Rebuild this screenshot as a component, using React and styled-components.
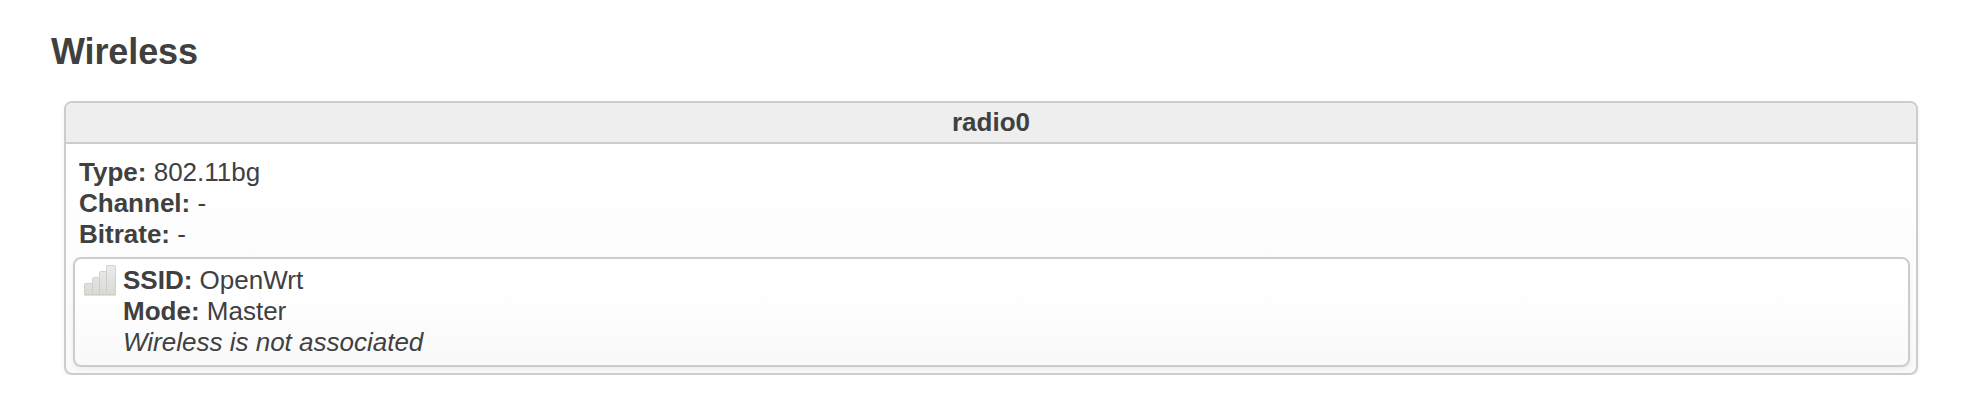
import React from "react";
import styled, { createGlobalStyle } from "styled-components";

const GlobalStyle = createGlobalStyle`
  * { box-sizing: border-box; }
  body {
    margin: 0;
    background: #fff;
    color: #404040;
    font-family: "Liberation Sans", Arial, sans-serif;
    font-size: 26px;
    line-height: 31px;
  }
`;

const Section = styled.section`
  padding: 31px 49px 0 51px;
`;

const Title = styled.h3`
  margin: 0 0 28px;
  font-size: 36px;
  line-height: 42px;
  letter-spacing: -0.1px;
`;

const Box = styled.div`
  border: 2px solid #ccc;
  border-radius: 8px;
  background: linear-gradient(#fff, #fff 25%, #f9f9f9);
  box-shadow: 0 2px 4px rgba(0, 0, 0, 0.06);
`;

const Radio = styled(Box)`
  height: 274px;
  margin-left: 13px;
`;

const RadioHeader = styled.header`
  height: 41px;
  padding-top: 4px;
  border-bottom: 2px solid #ccc;
  border-radius: 6px 6px 0 0;
  background: #eee;
  font-weight: bold;
  text-align: center;
`;

const Details = styled.div`
  padding: 13px 13px 7px;
`;

const Network = styled(Box)`
  display: flex;
  height: 110px;
  margin: 0 6px 0 7px;
  padding: 6px 9px;
`;

const SignalIcon = styled.svg`
  width: 32px;
  height: 32px;
  flex: none;
  margin-right: 7px;
`;

const BARS = [
  { x: 0.5, y: 18.5, width: 8 },
  { x: 8.5, y: 12.5, width: 7 },
  { x: 15.5, y: 6.5, width: 7 },
  { x: 22.5, y: 0.5, width: 9 },
];

function Signal() {
  return (
    <SignalIcon viewBox="0 0 32 32" aria-hidden="true">
      <defs>
        <linearGradient id="bar" gradientUnits="userSpaceOnUse" x1="0" y1="0" x2="0" y2="30">
          <stop offset="0" stopColor="#ebece8" />
          <stop offset="1" stopColor="#d8dad4" />
        </linearGradient>
      </defs>
      <rect x="0" y="29" width="32" height="2" rx="1" fill="#aaa" opacity="0.35" />
      {BARS.map(({ x, y, width }) => (
        <rect
          key={x}
          x={x}
          y={y}
          width={width}
          height={29.5 - y}
          rx="1"
          fill="url(#bar)"
          stroke="#c8c9c5"
          strokeOpacity="0.8"
        />
      ))}
    </SignalIcon>
  );
}

function Field({ label, value }) {
  return (
    <div>
      <strong>{label}:</strong> {value}
    </div>
  );
}

export default function App() {
  return (
    <>
      <GlobalStyle />
      <Section>
        <Title>Wireless</Title>
        <Radio>
          <RadioHeader>radio0</RadioHeader>
          <Details>
            <Field label="Type" value="802.11bg" />
            <Field label="Channel" value="-" />
            <Field label="Bitrate" value="-" />
          </Details>
          <Network>
            <Signal />
            <div>
              <Field label="SSID" value="OpenWrt" />
              <Field label="Mode" value="Master" />
              <em>Wireless is not associated</em>
            </div>
          </Network>
        </Radio>
      </Section>
    </>
  );
}
